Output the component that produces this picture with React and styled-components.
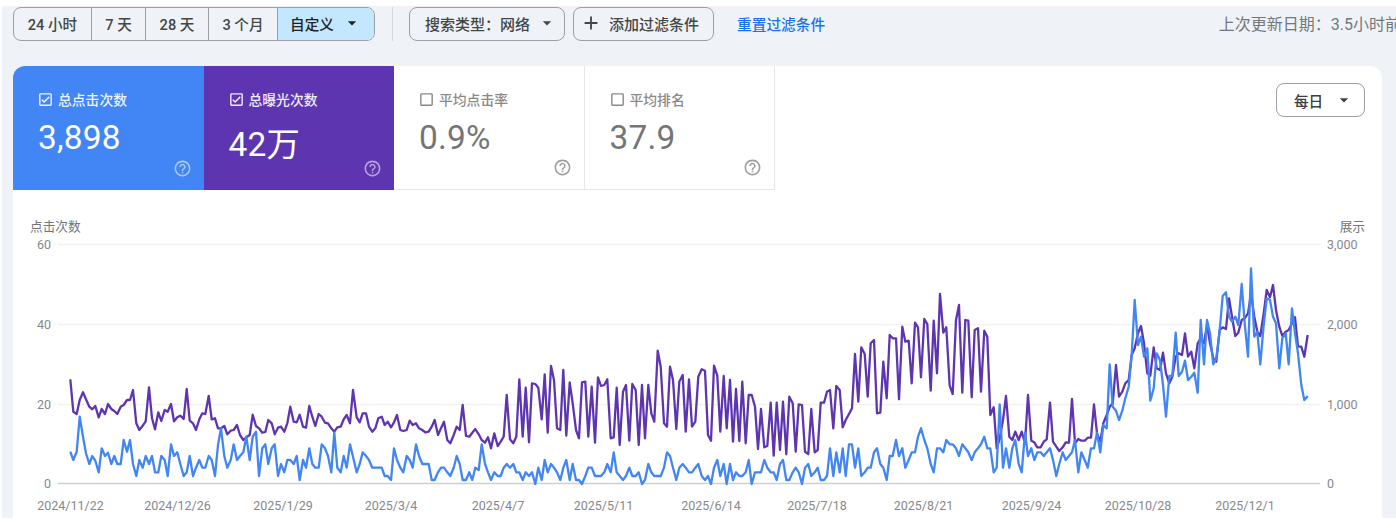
import React from "react";
import styled, { createGlobalStyle } from "styled-components";
import {
  MdAdd,
  MdArrowDropDown,
  MdCheckBoxOutlineBlank,
  MdHelpOutline,
  MdOutlineCheckBox,
} from "react-icons/md";

const FONT = `Roboto, "Noto Sans CJK SC", sans-serif`;

// traced from the report, "x:y" pairs per stretch of the chart
const OFFSETS = [0, 1050, 2100, 3138];

const PURPLE = [
  "211:508 220:605 230:612 239:570 249:547 258:568 268:590 277:598 286:588 296:622 305:597 315:612 324:582 334:597 343:603 352:612 362:590 371:585 381:570 390:570 399:540 409:640 418:660 428:647 437:634 447:532 456:625 465:658 475:607 484:633 494:600 503:605 513:582 522:634 532:622 541:617 551:627 560:537 569:632 579:640 588:660 598:628 607:610 616:612 626:558 635:628 645:625 654:655 663:655 673:648 682:673 692:662 701:660 711:645 720:675 730:690 739:682 749:675 758:614 768:648 777:655 787:668 796:666 805:630 815:640 824:673 834:653 843:650 853:665 862:640 871:590 881:635 890:637 899:614 909:650 918:653 928:588 937:620 946:648 956:612 965:620 975:638 984:640 994:655 1003:665 1012:652 1022:650 1031:628 1040:615",
  "0:640 9:540 20:622 29:637 38:610 48:610 57:650 67:665 76:655 85:625 95:620 104:645 113:635 123:652 132:637 141:615 151:660 160:663 170:660 179:632 188:645 198:640 207:655 217:660 226:667 236:665 245:650 254:630 264:675 273:655 282:635 292:690 301:700 311:675 320:650 329:660 338:585 348:678 358:680 367:668 376:657 386:673 395:690 405:698 414:682 423:715 433:670 443:708 452:695 461:680 470:555 480:688 490:700 499:680 508:508 518:680 527:533 537:697 546:520 556:522 565:533 575:628 584:493 593:668 603:468 612:510 621:655 631:660 640:480 649:677 659:517 668:580 678:660 687:685 696:517 706:515 715:680 725:530 735:698 744:502 753:528 763:525 772:508 782:685 791:682 800:533 809:705 819:545 828:525 838:692 847:522 857:540 866:705 876:525 885:685 895:525 904:610 913:635 923:422 932:470 942:640 951:650 960:470 969:510 979:657 988:515 998:495 1007:665 1017:508 1026:650 1036:635 1045:500",
  "5:478 15:482 24:675 33:692 42:467 52:497 61:665 71:498 80:655 90:510 99:695 108:537 118:693 127:515 137:700 146:555 155:555 165:590 174:717 183:597 193:712 202:708 212:578 221:737 230:578 240:720 249:575 259:733 268:560 278:580 287:725 296:583 306:585 315:725 325:732 334:597 344:727 353:720 362:578 372:578 381:545 390:540 400:655 409:528 419:540 428:652 437:630 447:612 456:595 465:432 475:575 484:412 494:432 503:560 512:400 522:390 531:610 541:608 550:455 560:565 569:375 578:385 588:385 597:568 607:350 616:395 626:392 635:520 645:338 654:352 663:502 673:327 682:342 692:542 701:332 711:490 720:252 730:368 739:352 749:527 758:552 768:330 777:285 787:548 796:330 805:332 815:562 824:360 834:355 843:545 853:362 862:380 871:615 881:592 890:715 899:685 909:630 918:558 928:680 937:690 946:665 956:690 965:665 975:700 984:555 994:692 1003:697 1012:712 1022:712 1031:695 1040:688",
  "12:578 21:695 31:710 40:723 50:712 59:697 69:698 78:567 87:700 97:687 106:692 116:692 125:683 135:683 144:583 153:670 163:695 172:640 182:615 191:590 200:580 210:465 219:560 229:545 238:520 248:510 257:435 266:415 276:370 285:348 294:400 304:490 313:497 323:412 332:475 342:480 351:428 360:490 370:520 379:500 389:440 398:430 408:435 417:370 426:440 436:425 445:475 455:400 464:385 474:400 483:345 492:400 502:445 511:455 521:360 530:352 540:357 549:265 558:320 568:378 577:368 587:330 596:325 606:310 615:250 625:320 634:365 643:378 653:310 662:240 672:262 681:225 690:300 700:350 709:378 719:365 728:360 738:340 747:322 756:410 766:410 775:440 785:375",
];

const BLUE = [
  "211:725 220:750 230:725 239:620 249:680 258:730 268:762 277:738 286:752 296:787 305:715 315:738 324:728 334:762 343:738 352:762 362:762 371:690 381:725 390:690 399:762 409:798 418:750 428:773 437:738 447:762 456:738 465:787 475:787 484:738 494:750 503:798 513:703 522:738 532:727 541:762 551:798 560:787 569:738 579:798 588:773 598:750 607:773 616:773 626:738 635:750 645:798 654:705 663:655 673:738 682:773 692:750 701:703 711:750 720:738 730:727 739:680 749:750 758:680 768:665 777:798 787:715 796:703 805:762 815:715 824:703 834:798 843:762 853:787 862:750 871:750 881:762 890:738 899:810 909:750 918:773 928:715 937:762 946:773 956:773 965:703 975:715 984:738 994:787 1003:668 1012:773 1022:787 1031:738 1040:773",
  "0:703 9:740 20:787 29:762 38:727 48:738 57:750 67:773 76:773 85:773 95:773 104:798 113:798 123:810 132:715 141:750 151:773 160:787 170:738 179:750 188:773 198:703 207:738 217:762 226:762 236:762 245:810 254:810 264:787 273:773 282:773 292:787 301:798 311:773 320:738 329:762 338:810 348:810 358:787 367:810 376:773 386:780 395:703 405:762 414:787 423:810 433:787 443:798 452:798 461:773 470:762 480:773 490:762 499:787 508:787 518:810 527:787 537:798 546:787 556:822 565:773 575:810 584:750 593:787 603:762 612:773 621:787 631:810 640:773 649:750 659:810 668:762 678:810 687:810 696:822 706:798 715:773 725:773 735:798 744:798 753:798 763:787 772:762 782:787 791:727 800:787 809:798 819:810 828:798 838:773 847:798 857:798 866:787 876:822 885:810 895:762 904:787 913:798 923:798 932:798 942:773 951:727 960:738 969:773 979:810 988:773 998:762 1007:773 1017:787 1026:787 1036:773 1045:762",
  "5:798 15:810 24:798 33:822 42:773 52:750 61:798 71:762 80:822 90:762 99:810 108:787 118:798 127:798 137:787 146:750 155:822 165:787 174:787 183:787 193:750 202:773 212:787 221:787 230:810 240:762 249:750 259:810 268:810 278:787 287:773 296:787 306:822 315:773 325:762 334:798 344:787 353:773 362:810 372:810 381:798 390:715 400:798 409:727 419:787 428:715 437:798 447:703 456:703 465:773 475:715 484:798 494:787 503:773 512:773 522:727 531:715 541:762 550:773 560:810 569:738 578:738 588:690 597:738 607:715 616:773 626:750 635:727 645:727 654:680 663:655 673:690 682:715 692:762 701:787 711:715 720:715 730:727 739:690 749:703 758:703 768:715 777:738 787:703 796:715 805:727 815:750 824:727 834:715 843:703 853:680 862:715 871:715 881:787 890:773 899:583 909:773 918:715 928:773 937:715 946:690 956:762 965:787 975:668 984:738 994:715 1003:750 1012:727 1022:727 1031:738 1040:727",
  "12:715 21:750 31:798 40:762 50:727 59:750 69:738 78:727 87:690 97:787 106:727 116:750 125:773 135:715 144:715 153:668 163:727 172:645 182:655 191:463 200:590 210:602 219:630 229:602 238:565 248:530 257:435 266:270 276:405 285:380 294:440 304:415 313:572 323:535 332:430 342:450 351:525 360:620 370:498 379:498 389:368 398:498 408:485 417:452 426:510 436:500 445:488 455:548 464:330 474:463 483:330 492:370 502:463 511:445 521:360 530:258 540:247 549:320 558:335 568:320 577:345 587:222 596:340 606:440 615:175 625:380 634:365 643:463 653:345 662:265 672:270 681:320 690:340 700:475 709:385 719:370 728:463 738:295 747:370 756:430 766:525 775:570 785:558",
];

const toPoints = (stretches) =>
  stretches
    .flatMap((stretch, i) =>
      stretch.split(" ").map((pair) => {
        const [x, y] = pair.split(":").map(Number);
        return `${((x + OFFSETS[i]) / 3).toFixed(1)},${(210 + y / 3).toFixed(1)}`;
      })
    )
    .join(" ");

const GRID = [
  { y: 244.5, left: "60", right: "3,000" },
  { y: 324.5, left: "40", right: "2,000" },
  { y: 404.5, left: "20", right: "1,000" },
  { y: 483.5, left: "0", right: "0" },
];

const DATES = [
  ["2024/11/22", 70.5],
  ["2024/12/26", 177.5],
  ["2025/1/29", 283],
  ["2025/3/4", 391],
  ["2025/4/7", 498],
  ["2025/5/11", 603.5],
  ["2025/6/14", 711],
  ["2025/7/18", 817],
  ["2025/8/21", 923.5],
  ["2025/9/24", 1031.5],
  ["2025/10/28", 1138],
  ["2025/12/1", 1245],
];

const METRICS = [
  { label: "总点击次数", value: "3,898", tone: "#4285f4", on: true },
  { label: "总曝光次数", value: "42万", tone: "#5e35b1", on: true, drop: true },
  { label: "平均点击率", value: "0.9%" },
  { label: "平均排名", value: "37.9" },
];

const GlobalStyle = createGlobalStyle`
  html, body {
    margin: 0;
    background: #fff;
    overflow: hidden;
  }
`;

const Page = styled.div`
  width: 1394px;
  height: 512px;
  margin: 6px 0 0 2px;
  padding: 1px 14px 0 11px;
  box-sizing: border-box;
  background: #eff3f8;
  font-family: ${FONT};
  color: #3c4043;
  display: flex;
  flex-direction: column;
`;

const Toolbar = styled.div`
  display: flex;
  align-items: center;
  height: 34px;
  margin-bottom: 25px;
  white-space: nowrap;
`;

const Segmented = styled.div`
  display: flex;
  height: 34px;
  box-sizing: border-box;
  border: 1px solid #9aa0a6;
  border-radius: 8px;
  overflow: hidden;
`;

const Segment = styled.div`
  display: flex;
  align-items: center;
  justify-content: center;
  box-sizing: border-box;
  width: ${(props) => props.width}px;
  padding-bottom: 2px;
  font-size: 14.6px;
  font-weight: 500;
  background: ${(props) => (props.$active ? "#c2e7ff" : "transparent")};
  color: ${(props) => (props.$active ? "#202124" : "#444746")};
  & + & {
    border-left: 1px solid #9aa0a6;
  }
`;

const Divider = styled.div`
  width: 1px;
  height: 34px;
  margin: 0 16px 0 17px;
  background: #d5d8dc;
`;

const Pill = styled.div`
  display: flex;
  align-items: center;
  box-sizing: border-box;
  width: ${(props) => props.width}px;
  height: 34px;
  margin-right: ${(props) => props.$gap || 0}px;
  padding: 0 0 2px ${(props) => props.$inset || 0}px;
  border: 1px solid #9aa0a6;
  border-radius: 8px;
  font-size: 15px;
  font-weight: 500;
  color: #444746;
`;

const ResetLink = styled.span`
  margin: 0 0 2px 23px;
  font-size: 14.7px;
  font-weight: 500;
  color: #1a73e8;
`;

const Updated = styled.span`
  margin: 0 -19px 2px auto;
  font-size: 16px;
  color: #74787c;
`;

const Card = styled.div`
  flex: 1;
  background: #fff;
  border-radius: 12px 12px 0 0;
  display: flex;
  flex-direction: column;
`;

const CardHead = styled.div`
  display: flex;
  justify-content: space-between;
  align-items: flex-start;
  height: 124px;
`;

const Tabs = styled.div`
  display: flex;
`;

const Tab = styled.div`
  position: relative;
  box-sizing: border-box;
  width: 190.5px;
  height: 124px;
  padding: 23px 0 0 25px;
  background: ${(props) => props.$tone || "#fff"};
  color: ${(props) => (props.$tone ? "#fff" : "#757575")};
  border-right: ${(props) => (props.$tone ? "none" : "1px solid #e6e6e6")};
  border-bottom: ${(props) => (props.$tone ? "none" : "1px solid #e6e6e6")};
  &:first-child {
    border-top-left-radius: 12px;
  }
`;

const TabLabel = styled.div`
  display: flex;
  align-items: center;
  gap: 4px;
  height: 20px;
  font-size: 13.8px;
  font-weight: 500;
  margin-left: -1px;
  opacity: ${(props) => (props.$tone ? 0.9 : 0.85)};
`;

const TabValue = styled.div`
  margin-top: ${(props) => (props.$drop ? "16px" : "9px")};
  font-size: 33.4px;
  line-height: 40px;
  letter-spacing: 0.2px;
`;

const Help = styled.span`
  position: absolute;
  right: 12px;
  bottom: 12px;
  display: flex;
  font-size: 19px;
  opacity: ${(props) => (props.$tone ? 0.55 : 0.7)};
`;

const Period = styled(Pill)`
  justify-content: space-between;
  margin: 17px 17px 0 0;
  padding: 0 10px 0 17px;
  font-size: 14.6px;
  color: #3c4043;
  background: #fff;
`;

const Plot = styled.svg`
  display: block;
  margin-top: 10px;
  font-family: ${FONT};
`;

const AxisText = styled.text`
  font-size: 12.5px;
  fill: #85898d;
`;

const AxisTitle = styled.text`
  font-size: 12.7px;
  fill: #70757a;
`;

const Series = styled.polyline`
  fill: none;
  stroke: ${(props) => props.$color};
  stroke-width: 2.3;
  stroke-linejoin: round;
`;

const Chart = () => (
  <Plot width="1367" height="318" viewBox="13 200 1367 318">
    <AxisTitle x="30" y="230.5">点击次数</AxisTitle>
    <AxisTitle x="1365" y="230.5" textAnchor="end">展示</AxisTitle>
    {GRID.map((row, i) => (
      <g key={row.y}>
        <line
          x1="58"
          x2="1320"
          y1={row.y}
          y2={row.y}
          stroke={i === 3 ? "#cfcfcf" : "#f1f1f2"}
          strokeWidth="1.3"
        />
        <AxisText x="51" y={row.y + 4.5} textAnchor="end">{row.left}</AxisText>
        <AxisText x="1327" y={row.y + 4.5}>{row.right}</AxisText>
      </g>
    ))}
    <Series $color="#5e35b1" points={toPoints(PURPLE)} />
    <Series $color="#4285f4" points={toPoints(BLUE)} />
    {DATES.map(([label, x]) => (
      <AxisText key={label} x={x} y="510" textAnchor="middle">{label}</AxisText>
    ))}
  </Plot>
);

export default function App() {
  return (
    <>
      <GlobalStyle />
      <Page>
        <Toolbar>
          <Segmented>
            <Segment width={77}>24 小时</Segment>
            <Segment width={54}>7 天</Segment>
            <Segment width={63}>28 天</Segment>
            <Segment width={69}>3 个月</Segment>
            <Segment width={97} $active>
              自定义
              <MdArrowDropDown size={20} style={{ marginLeft: 8 }} />
            </Segment>
          </Segmented>
          <Divider />
          <Pill width={156} $gap={8} $inset={15}>
            搜索类型：网络
            <MdArrowDropDown size={20} style={{ marginLeft: 7 }} />
          </Pill>
          <Pill width={141} $inset={6}>
            <MdAdd size={22} style={{ marginRight: 7 }} />
            添加过滤条件
          </Pill>
          <ResetLink>重置过滤条件</ResetLink>
          <Updated>上次更新日期：3.5小时前</Updated>
        </Toolbar>
        <Card>
          <CardHead>
            <Tabs>
              {METRICS.map((metric) => (
                <Tab key={metric.label} $tone={metric.tone}>
                  <TabLabel $tone={metric.tone}>
                    {metric.on ? (
                      <MdOutlineCheckBox size={17} />
                    ) : (
                      <MdCheckBoxOutlineBlank size={17} />
                    )}
                    {metric.label}
                  </TabLabel>
                  <TabValue $drop={metric.drop}>{metric.value}</TabValue>
                  <Help $tone={metric.tone}>
                    <MdHelpOutline />
                  </Help>
                </Tab>
              ))}
            </Tabs>
            <Period width={89}>
              每日
              <MdArrowDropDown size={20} />
            </Period>
          </CardHead>
          <Chart />
        </Card>
      </Page>
    </>
  );
}
